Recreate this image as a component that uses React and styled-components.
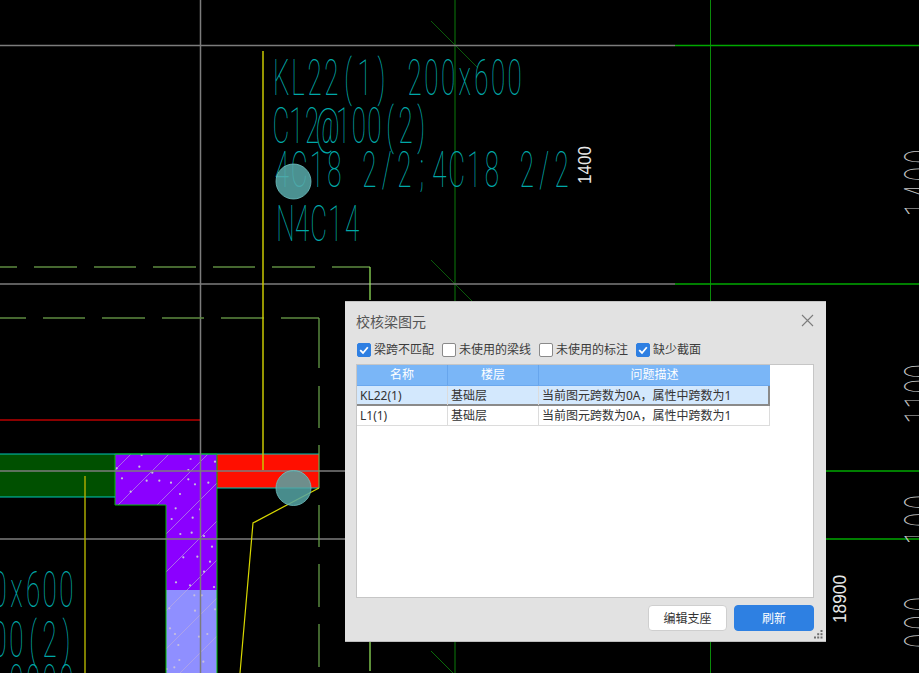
import React from 'react';
import styled, { createGlobalStyle } from 'styled-components';

const GlobalStyle = createGlobalStyle`
  html, body {
    margin: 0;
    background: #000;
    overflow: hidden;
  }
`;

const Canvas = styled.div`
  position: relative;
  width: 919px;
  height: 673px;
  overflow: hidden;
  background: #000;
  font-family: "Noto Sans", "Noto Sans CJK SC", sans-serif;
`;

const Drawing = styled.svg`
  display: block;
`;

const CadLabel = styled.text`
  font-family: Roboto, "Liberation Sans", sans-serif;
  font-weight: 100;
  font-size: 50px;
  text-anchor: middle;
  fill: ${p => p.$color || '#00a8a8'};
`;

const DimLabel = styled.text`
  font-family: "Liberation Sans", sans-serif;
  font-size: 18px;
  fill: #e8e8e8;
`;

const Dialog = styled.div`
  position: absolute;
  left: 345px;
  top: 301px;
  width: 481px;
  height: 341px;
  box-sizing: border-box;
  border-top: 1px solid #c4c4c4;
  border-bottom: 1px solid #bdbdbd;
  background: #e2e2e2;
  display: flex;
  flex-direction: column;
  padding: 0 12px 0 11px;
`;

const TitleBar = styled.div`
  display: flex;
  align-items: center;
  justify-content: space-between;
  height: 37px;
  flex: none;
`;

const Title = styled.span`
  font-size: 14px;
  color: #555;
`;

const CloseButton = styled.button`
  border: 0;
  padding: 0;
  width: 13px;
  height: 13px;
  background: none;
  display: flex;
  color: #7c7c7c;
`;

const FilterRow = styled.div`
  display: flex;
  align-items: center;
  gap: 8px;
  height: 20px;
  padding-left: 1px;
  margin-top: 1px;
  flex: none;
`;

const Filter = styled.label`
  display: flex;
  align-items: center;
  gap: 3px;
  font-size: 12px;
  line-height: 16px;
  color: #3c3c3c;
`;

const Box = styled.span`
  box-sizing: border-box;
  width: 14px;
  height: 14px;
  border-radius: 2px;
  border: 1px solid ${p => (p.$checked ? '#2e7fe2' : '#8a8a8a')};
  background: ${p => (p.$checked ? '#2e7fe2' : '#fff')};
  display: flex;
  align-items: center;
  justify-content: center;
`;

const TablePanel = styled.div`
  box-sizing: border-box;
  height: 234px;
  margin-top: 4px;
  border: 1px solid #c6c6c6;
  background: #fff;
  flex: none;
`;

const Row = styled.div`
  box-sizing: border-box;
  display: grid;
  grid-template-columns: 91px 91px 231px;
  width: 413px;
  height: 20px;
  background: ${p => (p.$selected ? '#d3e8fd' : '#fff')};
  border-bottom: ${p => (p.$selected ? '2px solid #8a8a8a' : '1px solid #dcdcdc')};
  border-right: ${p => (p.$selected ? '2px solid #8a8a8a' : '1px solid #dcdcdc')};
`;

const HeaderRow = styled(Row)`
  background: #7ab6f7;
  border: 0;
  border-bottom: 1px solid #6ba8ee;
  height: 21px;
`;

const HeaderCell = styled.div`
  box-sizing: border-box;
  border-right: 1px solid #67a5ec;
  text-align: center;
  font-size: 12px;
  line-height: 20px;
  color: #fff;
  &:last-child {
    border-right: 0;
  }
`;

const Cell = styled.div`
  box-sizing: border-box;
  border-right: 1px solid #dcdcdc;
  padding-left: 3px;
  font-size: 12px;
  line-height: 19px;
  color: #333;
  white-space: nowrap;
  &:last-child {
    border-right: 0;
  }
`;

const Footer = styled.div`
  display: flex;
  justify-content: flex-end;
  gap: 7px;
  margin-top: 7px;
`;

const Button = styled.button`
  box-sizing: border-box;
  width: ${p => (p.$primary ? '80px' : '79px')};
  height: 26px;
  padding: 0;
  border-radius: 4px;
  border: 1px solid ${p => (p.$primary ? '#2e80e2' : '#cfcfcf')};
  background: ${p => (p.$primary ? '#2e80e2' : '#fff')};
  color: ${p => (p.$primary ? '#fff' : '#333')};
  font-family: inherit;
  font-size: 12px;
`;

const Grip = styled.svg`
  position: absolute;
  right: 3px;
  bottom: 2px;
`;

const filters = [
  { label: '梁跨不匹配', checked: true },
  { label: '未使用的梁线', checked: false },
  { label: '未使用的标注', checked: false },
  { label: '缺少截面', checked: true },
];

const rows = [
  { name: 'KL22(1)', floor: '基础层', issue: '当前图元跨数为0A，属性中跨数为1', selected: true },
  { name: 'L1(1)', floor: '基础层', issue: '当前图元跨数为0A，属性中跨数为1', selected: false },
];

// hatch dots, read off the slab at 3x
const dots = [
  [425, 45], [572, 57], [645, 65], [418, 80], [350, 85], [565, 90], [457, 98], [366, 115],
  [565, 118], [440, 122], [478, 122], [513, 128], [585, 133], [625, 128], [392, 155], [540, 162],
  [527, 205], [600, 208], [515, 237], [578, 233], [575, 278], [541, 282], [612, 288], [636, 320],
  [550, 352], [592, 350], [630, 365], [612, 395], [528, 427], [570, 436], [642, 441], [605, 466],
  [583, 466], [508, 505], [585, 512], [645, 508], [510, 565], [525, 582], [622, 582], [597, 590],
  [535, 615], [538, 660], [610, 665], [523, 682], [500, 687],
];

const hatchOffsets = [585, 623, 662, 700, 738, 777, 815, 853, 891];
const slab = '115,454 217,454 217,590 166,590 166,505 115,505';
const wall = '166,590 217,590 217,673 166,673';

const Dashes = ({ y, runs, color = '#5e8b40' }) =>
  runs.map(([a, b]) => <line key={a} x1={a} x2={b} y1={y} y2={y} stroke={color} strokeWidth="1.5" />);

const VDashes = ({ x, runs, color = '#6da94d' }) =>
  runs.map(([a, b]) => <line key={a} x1={x} x2={x} y1={a} y2={b} stroke={color} strokeWidth="1.2" />);

// squeezed fixed-pitch text, each glyph centred in its own cell
const SQUEEZE = 0.52;
const cellCentres = (text, cell) =>
  Array.from(text, (_, i) => ((i + 0.5) * cell) / SQUEEZE).join(' ');

const CadText = ({ x, y, cell = 16.67, children }) => (
  <CadLabel transform={`translate(${x} ${y}) scale(${SQUEEZE} 1)`} x={cellCentres(children, cell)} y="0">
    {children}
  </CadLabel>
);

const SideText = ({ x, y, cell, children }) => (
  <CadLabel
    $color="#c4c4c4"
    transform={`translate(${x} ${y}) rotate(-90) scale(${SQUEEZE} 1)`}
    x={cellCentres(children, cell)}
    y="0"
  >
    {children}
  </CadLabel>
);

const GridLine = ({ y }) => (
  <>
    <line x1="0" x2="675" y1={y} y2={y} stroke="#7c7c7c" strokeWidth="1.5" />
    <line x1="675" x2="919" y1={y} y2={y} stroke="#00a800" strokeWidth="1.5" />
  </>
);

const Plan = () => (
  <Drawing width="919" height="673" viewBox="0 0 919 673">
    <defs>
      <clipPath id="hatchClip">
        <polygon points={slab} />
        <polygon points={wall} />
      </clipPath>
    </defs>

    {/* axes */}
    <line x1="455" x2="455" y1="0" y2="673" stroke="#0a7a0a" />
    <line x1="710.5" x2="710.5" y1="0" y2="673" stroke="#0a8a0a" />
    <line x1="431" y1="21" x2="478" y2="68" stroke="#0a5a0a" />
    <line x1="431" y1="260" x2="473" y2="302" stroke="#0a5a0a" />
    <line x1="431" y1="651" x2="453" y2="673" stroke="#0a6a0a" />

    {/* beams */}
    <rect x="0" y="454" width="115" height="43" fill="#005000" />
    <rect x="217" y="454" width="102" height="34" fill="#ff0f00" />
    <polygon points={slab} fill="#8b00ff" />
    <polygon points={wall} fill="#8f8fff" />
    <g clipPath="url(#hatchClip)">
      {hatchOffsets.map(k => (
        <line key={k} x1={k - 454} y1="454" x2={k - 673} y2="673" stroke="#c0b0dc" strokeWidth="0.8" opacity="0.75" />
      ))}
      {dots.map(([x, y]) => (
        <circle key={`${x}-${y}`} cx={x / 3} cy={440 + y / 3} r="1.1" fill="#c8c0dc" />
      ))}
    </g>
    <polyline points="115,454 115,505 166,505 166,673" fill="none" stroke="#00c000" />
    <line x1="217" x2="217" y1="454" y2="673" stroke="#00c000" />
    <line x1="0" x2="319" y1="454" y2="454" stroke="#00c8b8" strokeWidth="1.2" />
    <line x1="115" x2="217" y1="454" y2="454" stroke="#00b800" strokeWidth="1.2" />
    <line x1="0" x2="115" y1="497" y2="497" stroke="#00c8b8" strokeWidth="1.2" />
    <line x1="217" x2="319" y1="488" y2="488" stroke="#00c8b8" strokeWidth="1.2" />
    <line x1="0" x2="200" y1="420" y2="420" stroke="#8b0000" strokeWidth="2" />

    {/* grid */}
    <GridLine y={45.5} />
    <GridLine y={284} />
    <GridLine y={471} />
    <GridLine y={539} />
    <line x1="200.5" x2="200.5" y1="0" y2="673" stroke="#7c7c7c" strokeWidth="1.5" />

    {/* dashed beam outlines */}
    <Dashes y={267} runs={[[0, 17], [34, 77], [94, 136], [153, 196], [213, 255], [272, 315], [332, 370]]} />
    <Dashes y={318} runs={[[0, 26], [43, 85], [102, 145], [162, 204], [221, 264], [281, 319]]} />
    <VDashes x={370} runs={[[267, 300], [642, 671]]} color="#9cf060" />
    <VDashes x={319} runs={[[318, 368], [386, 428], [445, 488], [505, 547], [564, 607], [624, 667]]} />

    {/* leaders */}
    <line x1="263" x2="263" y1="51" y2="470" stroke="#c8c800" strokeWidth="1.5" />
    <line x1="85" x2="85" y1="476" y2="673" stroke="#a8a800" strokeWidth="1.5" />
    <polyline points="319,488 253,523 240,673" fill="none" stroke="#d8d800" strokeWidth="1.2" />

    {/* annotations */}
    <CadText x={273} y={95}>KL22(1) 200x600</CadText>
    <CadText x={273} y={143} cell={15.6}>C12@100(2)</CadText>
    <CadText x={273} y={187} cell={17.5}>4C18 2/2;4C18 2/2</CadText>
    <CadText x={277} y={241}>N4C14</CadText>
    <CadText x={-42} y={607}>200x600</CadText>
    <CadText x={-92} y={657}>C12@100(2)</CadText>
    <CadText x={8} y={700}>0000</CadText>

    <DimLabel x={591} y={184} textLength={38} lengthAdjust="spacingAndGlyphs" transform="rotate(-90 591 184)">1400</DimLabel>
    <DimLabel x={846} y={623} textLength={48} lengthAdjust="spacingAndGlyphs" transform="rotate(-90 846 623)">18900</DimLabel>

    <SideText x={940} y={218} cell={17.5}>1400</SideText>
    <SideText x={940} y={424} cell={15}>1100</SideText>
    <SideText x={940} y={546} cell={17.5}>100</SideText>
    <SideText x={940} y={650} cell={18.3}>000</SideText>

    {/* grip handles */}
    <circle cx="293.5" cy="181.5" r="17.5" fill="#58aaaa" fillOpacity="0.85" stroke="#6fc0c0" strokeOpacity="0.8" />
    <circle cx="293.5" cy="488" r="17.5" fill="#55a5a5" fillOpacity="0.85" stroke="#6fc0c0" strokeOpacity="0.8" />
  </Drawing>
);

const App = () => (
  <Canvas>
    <GlobalStyle />
    <Plan />
    <Dialog>
      <TitleBar>
        <Title>校核梁图元</Title>
        <CloseButton aria-label="关闭">
          <svg width="13" height="13" viewBox="0 0 13 13">
            <path d="M1 1 L12 12 M12 1 L1 12" stroke="currentColor" strokeWidth="1.1" fill="none" />
          </svg>
        </CloseButton>
      </TitleBar>
      <FilterRow>
        {filters.map(f => (
          <Filter key={f.label}>
            <Box $checked={f.checked}>
              {f.checked && (
                <svg width="10" height="10" viewBox="0 0 10 10">
                  <path d="M1.2 5.2 L4 8 L8.8 2.2" stroke="#fff" strokeWidth="1.8" fill="none" />
                </svg>
              )}
            </Box>
            {f.label}
          </Filter>
        ))}
      </FilterRow>
      <TablePanel>
        <HeaderRow>
          <HeaderCell>名称</HeaderCell>
          <HeaderCell>楼层</HeaderCell>
          <HeaderCell>问题描述</HeaderCell>
        </HeaderRow>
        {rows.map(r => (
          <Row key={r.name} $selected={r.selected}>
            <Cell>{r.name}</Cell>
            <Cell>{r.floor}</Cell>
            <Cell>{r.issue}</Cell>
          </Row>
        ))}
      </TablePanel>
      <Footer>
        <Button>编辑支座</Button>
        <Button $primary>刷新</Button>
      </Footer>
      <Grip width="9" height="9" viewBox="0 0 9 9">
        <g fill="#6e6e6e">
          <rect x="6.5" y="0" width="2" height="2" />
          <rect x="3.2" y="3.2" width="2" height="2" />
          <rect x="6.5" y="3.2" width="2" height="2" />
          <rect x="0" y="6.5" width="2" height="2" />
          <rect x="3.2" y="6.5" width="2" height="2" />
          <rect x="6.5" y="6.5" width="2" height="2" />
        </g>
      </Grip>
    </Dialog>
  </Canvas>
);

export default App;
